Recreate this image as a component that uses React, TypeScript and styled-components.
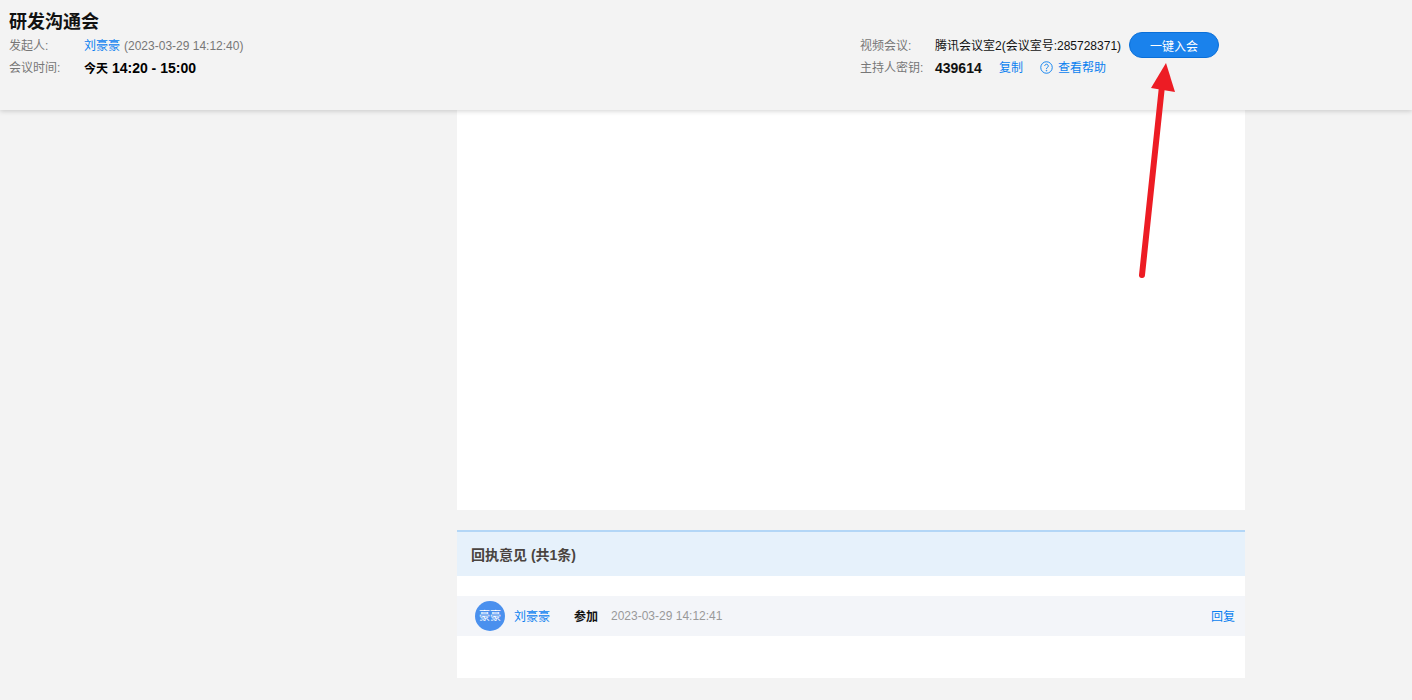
import { createGlobalStyle } from 'styled-components';
import styled from 'styled-components';

const GlobalStyle = createGlobalStyle`
  html, body {
    margin: 0;
    padding: 0;
    background: #f3f3f3;
    font-family: "Liberation Sans", Arial, "Noto Sans CJK SC", sans-serif;
    font-size: 12px;
    overflow: hidden;
  }
`;

const Page = styled.div`
  position: relative;
  width: 1412px;
  height: 700px;
  overflow: hidden;
`;

const Header = styled.header`
  position: relative;
  z-index: 1;
  height: 110px;
  box-sizing: border-box;
  padding: 10px 0 0 9px;
  background: #f3f3f3;
  box-shadow: 0 1px 5px rgba(0, 0, 0, 0.18);
  display: flex;
`;

const Info = styled.div`
  width: 851px;
`;

const Title = styled.h1`
  margin: 0;
  height: 25px;
  font-size: 18px;
  line-height: 24px;
  font-weight: bold;
  color: #111;
`;

const Meta = styled.div`
  display: flex;
  align-items: center;
  height: 23px;
  line-height: 23px;

  & + & {
    margin-top: -1px;
  }
`;

const Label = styled.span`
  width: 75px;
  color: #777;
`;

const Link = styled.a`
  color: #0a7ff0;
  cursor: pointer;
`;

const Muted = styled.span`
  color: #777;
  margin-left: 4px;
`;

const Strong = styled.strong`
  color: #000;
  font-size: 14px;
  line-height: 21px;
`;

const Today = styled.span`
  font-size: 12px;
`;

const Value = styled.span`
  color: #111;
`;

const Side = styled.div`
  padding-top: 25px;
`;

const Key = styled.strong`
  width: 64px;
  color: #111;
  font-size: 14px;
`;

const CopyLink = styled(Link)`
  width: 41px;
`;

const HelpLink = styled(Link)`
  display: flex;
  align-items: center;
  gap: 5px;

  & svg {
    margin-top: -3px;
  }
`;

const JoinButton = styled.button`
  width: 90px;
  height: 26px;
  margin: 22px 0 0 8px;
  padding: 0;
  border: 1px solid #0a6fd8;
  border-radius: 13px;
  background: #1a82ec;
  color: #fff;
  font: inherit;
  cursor: pointer;
`;

const Main = styled.main`
  width: 788px;
  margin-left: 457px;
`;

const Blank = styled.div`
  height: 400px;
  background: #fff;
`;

const Feedback = styled.section`
  margin-top: 20px;
  background: #fff;
  padding-bottom: 42px;
`;

const FeedbackTitle = styled.h2`
  margin: 0 0 20px;
  height: 44px;
  padding-left: 14px;
  border-top: 2px solid #b3d6f6;
  background: #e6f1fb;
  color: #4a4440;
  font-size: 14px;
  line-height: 46px;
  font-weight: bold;
`;

const ReplyRow = styled.div`
  display: flex;
  align-items: center;
  height: 40px;
  padding: 0 10px 0 18px;
  background: #f3f5f9;
`;

const Avatar = styled.span`
  width: 30px;
  height: 30px;
  margin-right: 9px;
  border-radius: 50%;
  background: #4a90ee;
  color: #fff;
  font-size: 11px;
  line-height: 30px;
  text-align: center;
  white-space: nowrap;
`;

const ReplyName = styled(Link)`
  width: 60px;
  margin-top: -2px;
`;

const ReplyState = styled.strong`
  width: 37px;
  margin-top: -2px;
  color: #111;
  font-weight: bold;
`;

const ReplyTime = styled.span`
  flex: 1;
  color: #999;
`;

const ReplyLink = styled(Link)`
  margin-top: -2px;
`;

const Arrow = styled.svg`
  position: absolute;
  z-index: 2;
  left: 1120px;
  top: 50px;
  pointer-events: none;
`;

const App = () => (
  <Page>
    <GlobalStyle />
    <Header>
      <Info>
        <Title>研发沟通会</Title>
        <Meta>
          <Label>发起人:</Label>
          <Link>刘豪豪</Link>
          <Muted>(2023-03-29 14:12:40)</Muted>
        </Meta>
        <Meta>
          <Label>会议时间:</Label>
          <Strong>
            <Today>今天</Today> 14:20 - 15:00
          </Strong>
        </Meta>
      </Info>
      <Side>
        <Meta>
          <Label>视频会议:</Label>
          <Value>腾讯会议室2(会议室号:285728371)</Value>
        </Meta>
        <Meta>
          <Label>主持人密钥:</Label>
          <Key>439614</Key>
          <CopyLink>复制</CopyLink>
          <HelpLink>
            <svg width="13" height="13" viewBox="0 0 14 14" fill="none" stroke="currentColor">
              <circle cx="7" cy="7" r="6.2" />
              <path d="M5.1 5.4a1.9 1.9 0 1 1 2.9 1.6c-.7.4-1 .8-1 1.6" />
              <circle cx="7" cy="10.4" r="0.4" />
            </svg>
            查看帮助
          </HelpLink>
        </Meta>
      </Side>
      <JoinButton>一键入会</JoinButton>
    </Header>
    <Main>
      <Blank />
      <Feedback>
        <FeedbackTitle>回执意见 (共1条)</FeedbackTitle>
        <ReplyRow>
          <Avatar>豪豪</Avatar>
          <ReplyName>刘豪豪</ReplyName>
          <ReplyState>参加</ReplyState>
          <ReplyTime>2023-03-29 14:12:41</ReplyTime>
          <ReplyLink>回复</ReplyLink>
        </ReplyRow>
      </Feedback>
    </Main>
    <Arrow width="70" height="235" viewBox="0 0 70 235">
      <path d="M22 225 L42 36" stroke="#ed1c24" strokeWidth="6" strokeLinecap="round" fill="none" />
      <path d="M46 13 L55 42 L31 38 Z" fill="#ed1c24" />
    </Arrow>
  </Page>
);

export default App;
